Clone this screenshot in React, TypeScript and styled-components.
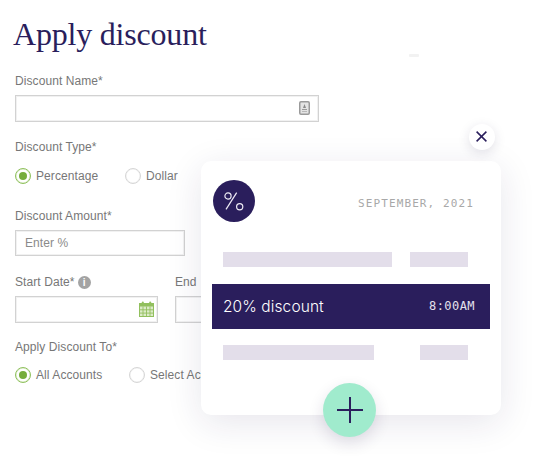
import React from "react";
import styled, { createGlobalStyle } from "styled-components";

const Global = createGlobalStyle`
  html, body { margin: 0; padding: 0; background: #fff; }
  body { width: 558px; height: 473px; overflow: hidden; font-family: "Liberation Sans", Arial, sans-serif; }
`;

const Page = styled.div`
  position: relative;
  width: 558px;
  height: 473px;
  overflow: hidden;
  background: #fff;
`;

const Form = styled.form`
  display: flex;
  flex-direction: column;
  padding: 14px 0 0 15px;
`;

const Title = styled.h1`
  margin: 0 0 0 -2px;
  height: 41px;
  font-family: "Liberation Serif", "Times New Roman", serif;
  font-weight: 400;
  font-size: 32px;
  line-height: 41px;
  letter-spacing: -0.2px;
  color: #2a1e5c;
`;

const Field = styled.div<{ $top: number }>`
  display: flex;
  flex-direction: column;
  margin-top: ${(p) => p.$top}px;
`;

const Label = styled.label`
  display: flex;
  align-items: center;
  gap: 3px;
  height: 14px;
  font-size: 12px;
  line-height: 14px;
  letter-spacing: 0.08px;
  color: #777;
  white-space: nowrap;
`;

const EndLabel = styled(Label)`
  word-spacing: 1px;
`;

const InputBox = styled.div<{ $w: number; $pad?: number }>`
  box-sizing: border-box;
  display: flex;
  align-items: center;
  justify-content: flex-end;
  width: ${(p) => p.$w}px;
  height: 26.5px;
  margin-top: 7px;
  padding: 0 ${(p) => p.$pad ?? 8}px 0 9px;
  background: #fff;
  border: 1px solid #d2d2d2;
  box-shadow: inset 0 0 0 1px #f1f1f1;
  font-size: 12px;
  letter-spacing: 0.08px;
  color: #8a8a8a;
`;

const Placeholder = styled.span`
  flex: 1;
`;

const RadioRow = styled.div<{ $top: number }>`
  display: flex;
  align-items: center;
  height: 16px;
  margin-top: ${(p) => p.$top}px;
`;

const RadioItem = styled.div<{ $w: number }>`
  display: flex;
  align-items: center;
  gap: 5px;
  width: ${(p) => p.$w}px;
  font-size: 12px;
  letter-spacing: 0.08px;
  color: #777;
  white-space: nowrap;
`;

const Radio = styled.span<{ $on?: boolean }>`
  box-sizing: border-box;
  display: flex;
  align-items: center;
  justify-content: center;
  width: 16px;
  height: 16px;
  border-radius: 50%;
  background: #fff;
  border: 1px solid ${(p) => (p.$on ? "#8fc15c" : "#d6d6d6")};
  box-shadow: inset 0 0 0 0.5px ${(p) => (p.$on ? "#d3e6bd" : "#eeeeee")};
  &::after {
    content: "";
    display: ${(p) => (p.$on ? "block" : "none")};
    width: 8px;
    height: 8px;
    border-radius: 50%;
    background: #76ad3c;
  }
`;

const DateRow = styled.div`
  display: flex;
  gap: 17px;
  margin-top: 19px;
`;

const DateField = styled.div`
  display: flex;
  flex-direction: column;
`;

const InfoDot = styled.span`
  display: flex;
  align-items: center;
  justify-content: center;
  width: 13px;
  height: 13px;
  border-radius: 50%;
  background: #a3a3a3;
  color: #fff;
  font-size: 10px;
  font-weight: 700;
  line-height: 13px;
`;

const Card = styled.section`
  position: absolute;
  left: 201px;
  top: 161px;
  box-sizing: border-box;
  display: flex;
  flex-direction: column;
  width: 300px;
  height: 254px;
  padding-top: 19px;
  background: #fff;
  border-radius: 10px;
  box-shadow: 0 8px 36px rgba(40, 30, 80, 0.11);
`;

const CardHead = styled.header`
  display: flex;
  align-items: center;
  justify-content: space-between;
  height: 42px;
  padding: 0 27px 0 12px;
`;

const Avatar = styled.div`
  display: flex;
  align-items: center;
  justify-content: center;
  width: 42px;
  height: 42px;
  border-radius: 50%;
  background: #2a1e5c;
`;

const Month = styled.span`
  font-family: "DejaVu Sans Mono", "Liberation Mono", monospace;
  font-size: 11px;
  letter-spacing: 1.11px;
  color: #a8a8a8;
  margin-top: 5px;
`;

const SkeletonRow = styled.div<{ $top: number }>`
  display: flex;
  justify-content: space-between;
  margin-top: ${(p) => p.$top}px;
  padding: 0 33px 0 22px;
`;

const Bar = styled.div<{ $w: number }>`
  width: ${(p) => p.$w}px;
  height: 15px;
  background: #e3deea;
`;

const ActiveRow = styled.div`
  display: flex;
  align-items: center;
  justify-content: space-between;
  height: 44.5px;
  margin: 17px 11px 0;
  padding: 0 15px 0 11px;
  background: #2a1e5c;
  color: #fff;
`;

const RowName = styled.span`
  font-family: Inter, "Liberation Sans", sans-serif;
  font-size: 15.5px;
  font-weight: 300;
  letter-spacing: 0.1px;
`;

const RowTime = styled.span`
  font-family: "DejaVu Sans Mono", "Liberation Mono", monospace;
  font-size: 12px;
  letter-spacing: 0.43px;
  color: #e4e1ec;
`;

const CloseButton = styled.button`
  position: absolute;
  left: 469px;
  top: 124px;
  display: flex;
  align-items: center;
  justify-content: center;
  width: 26px;
  height: 26px;
  padding: 0 1px 1px 0;
  border: 0;
  border-radius: 50%;
  background: #fff;
  box-shadow: 0 3px 12px rgba(40, 30, 80, 0.13);
`;

const AddButton = styled.button`
  position: absolute;
  left: 323px;
  top: 383px;
  display: flex;
  align-items: center;
  justify-content: center;
  width: 53px;
  height: 54px;
  padding: 0;
  border: 0;
  border-radius: 50%;
  background: #a0ebcd;
  box-shadow: 0 6px 16px rgba(40, 30, 80, 0.14);
`;

const Speck = styled.div`
  position: absolute;
  left: 409px;
  top: 54px;
  width: 10px;
  height: 3px;
  border-radius: 1px;
  background: #f2f2f2;
`;

const IdCardIcon = () => (
  <svg width="11" height="14" viewBox="0 0 11 14">
    <rect x="0.75" y="0.75" width="9.5" height="12.5" rx="1.2" fill="#e4e4e4" stroke="#9a9a9a" strokeWidth="1.5" />
    <path d="M5.5 3 L7 7 H4 Z" fill="#8a8a8a" />
    <rect x="3" y="8" width="5" height="1" fill="#9a9a9a" />
    <rect x="3" y="10" width="5" height="1" fill="#b8b8b8" />
  </svg>
);

const CalendarIcon = () => (
  <svg width="15" height="16" viewBox="0 0 15 16">
    <rect x="0.5" y="2.5" width="14" height="13" fill="#dcebc8" stroke="#92c05e" />
    <rect x="0.5" y="2.5" width="14" height="3" fill="#92c05e" />
    <rect x="2.8" y="0.5" width="2" height="3.5" rx="1" fill="#92c05e" />
    <rect x="10.2" y="0.5" width="2" height="3.5" rx="1" fill="#92c05e" />
    <path d="M4 5.5V15.5M7.5 5.5V15.5M11 5.5V15.5M0.5 8.8H14.5M0.5 12.1H14.5" stroke="#92c05e" strokeWidth="0.9" fill="none" />
  </svg>
);

const PercentIcon = () => (
  <svg width="22" height="22" viewBox="0 0 22 22" fill="none" stroke="#efecf5" strokeWidth="1.2">
    <circle cx="5" cy="6" r="3.1" />
    <circle cx="16.7" cy="16.7" r="3.1" />
    <path d="M13.7 2.7 L3 19.3" />
  </svg>
);

const CloseIcon = () => (
  <svg width="11" height="11" viewBox="0 0 11 11" fill="none" stroke="#2a1e5c" strokeWidth="1.5">
    <path d="M0.6 0.6 L10.4 10.4 M10.4 0.6 L0.6 10.4" />
  </svg>
);

const PlusIcon = () => (
  <svg width="26" height="26" viewBox="0 0 26 26" fill="none" stroke="#2a1e5c" strokeWidth="2">
    <path d="M13 0V26M0 13H26" />
  </svg>
);

export default function App() {
  return (
    <Page>
      <Global />
      <Form>
        <Title>Apply discount</Title>
        <Field $top={19}>
          <Label>Discount Name*</Label>
          <InputBox $w={304}>
            <IdCardIcon />
          </InputBox>
        </Field>
        <Field $top={18}>
          <Label>Discount Type*</Label>
          <RadioRow $top={14}>
            <RadioItem $w={110}>
              <Radio $on />
              Percentage
            </RadioItem>
            <RadioItem $w={100}>
              <Radio />
              Dollar
            </RadioItem>
          </RadioRow>
        </Field>
        <Field $top={25}>
          <Label>Discount Amount*</Label>
          <InputBox $w={170}>
            <Placeholder>Enter %</Placeholder>
          </InputBox>
        </Field>
        <DateRow>
          <DateField>
            <Label>
              Start Date*
              <InfoDot>i</InfoDot>
            </Label>
            <InputBox $w={143} $pad={3}>
              <CalendarIcon />
            </InputBox>
          </DateField>
          <DateField>
            <EndLabel>End Date*</EndLabel>
            <InputBox $w={143} />
          </DateField>
        </DateRow>
        <Field $top={17}>
          <Label>Apply Discount To*</Label>
          <RadioRow $top={13}>
            <RadioItem $w={114}>
              <Radio $on />
              All Accounts
            </RadioItem>
            <RadioItem $w={130}>
              <Radio />
              Select Accounts
            </RadioItem>
          </RadioRow>
        </Field>
      </Form>
      <Speck />
      <Card>
        <CardHead>
          <Avatar>
            <PercentIcon />
          </Avatar>
          <Month>SEPTEMBER, 2021</Month>
        </CardHead>
        <SkeletonRow $top={30}>
          <Bar $w={169} />
          <Bar $w={58} />
        </SkeletonRow>
        <ActiveRow>
          <RowName>20% discount</RowName>
          <RowTime>8:00AM</RowTime>
        </ActiveRow>
        <SkeletonRow $top={16.5}>
          <Bar $w={151} />
          <Bar $w={48} />
        </SkeletonRow>
      </Card>
      <CloseButton aria-label="Close">
        <CloseIcon />
      </CloseButton>
      <AddButton aria-label="Add">
        <PlusIcon />
      </AddButton>
    </Page>
  );
}
